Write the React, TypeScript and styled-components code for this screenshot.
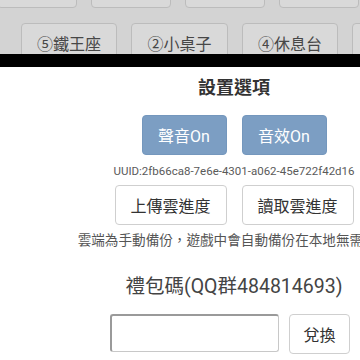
import React from 'react';
import styled, { createGlobalStyle } from 'styled-components';

const GlobalStyle = createGlobalStyle`
  html, body {
    margin: 0;
    padding: 0;
    background: #ffffff;
  }
  body {
    width: 360px;
    height: 360px;
    overflow: hidden;
    font-family: Roboto, "Noto Sans CJK TC", sans-serif;
  }
`;

const Screen = styled.div`
  width: 360px;
  height: 360px;
  overflow: hidden;
  display: flex;
  flex-direction: column;
`;

const Backdrop = styled.div`
  height: 54px;
  flex-shrink: 0;
  background: #d3d3d3;
  overflow: hidden;
`;

const BackdropRows = styled.div`
  margin-top: -28px;
  display: flex;
  flex-direction: column;
  gap: 15px;
`;

const BackdropRow = styled.div<{ $offset: number }>`
  display: flex;
  gap: 14px;
  margin-left: ${p => p.$offset}px;
`;

const MapButton = styled.div<{ $w: number }>`
  flex-shrink: 0;
  width: ${p => p.$w}px;
  height: 36px;
  box-sizing: border-box;
  background: #d9d9d9;
  border: 1px solid #bcbcbc;
  border-radius: 4px;
  display: flex;
  align-items: center;
  justify-content: center;
  padding-top: 4px;
  font-size: 16px;
  color: #474747;
`;

const HeaderBar = styled.div`
  height: 13px;
  flex-shrink: 0;
  background: #000;
`;

const Panel = styled.div`
  width: 468px;
  flex: 1;
  background: #fff;
  display: flex;
  flex-direction: column;
  align-items: center;
  padding-top: 9px;
`;

const Title = styled.div`
  font-size: 18px;
  line-height: 24px;
  font-weight: bold;
  color: #333;
`;

const ButtonRow = styled.div<{ $top: number }>`
  display: flex;
  gap: 15px;
  margin-top: ${p => p.$top}px;
`;

const ToggleButton = styled.button`
  width: 85px;
  height: 40px;
  border: 1px solid #7497bd;
  border-radius: 4px;
  background: #7c9ec3;
  color: #fff;
  font-family: inherit;
  font-size: 16px;
  padding: 0;
`;

const PlainButton = styled.button<{ $w: number }>`
  width: ${p => p.$w}px;
  height: 40px;
  border: 1px solid #cfcfcf;
  border-radius: 4px;
  background: #fff;
  color: #333;
  font-family: inherit;
  font-size: 16px;
  padding: 0;
  white-space: nowrap;
`;

const Uuid = styled.div`
  margin-top: 9px;
  font-size: 11.5px;
  line-height: 14px;
  color: #5a5a5a;
  white-space: nowrap;
`;

const Note = styled.div`
  margin-top: 6px;
  font-size: 13.6px;
  line-height: 18px;
  color: #555;
  white-space: nowrap;
`;

const GiftLabel = styled.div`
  margin-top: 26px;
  font-size: 19.5px;
  line-height: 24px;
  color: #444;
  white-space: nowrap;
`;

const GiftRow = styled.div`
  margin-top: 15px;
  margin-right: 8px;
  display: flex;
  align-items: flex-start;
  gap: 10px;
`;

const CodeInput = styled.input`
  width: 169px;
  height: 38px;
  box-sizing: border-box;
  border: 1px solid #c8c8c8;
  border-top: 2px solid #9a9a9a;
  border-left: 2px solid #9a9a9a;
  border-radius: 3px;
  background: #fff;
  font-size: 16px;
  outline: none;
`;

const topRow = [80, 80, 80, 80];
const bottomRow = ['⑤鐵王座', '②小桌子', '④休息台', ''];
const bottomWidths = [96, 97, 96, 96];

export default function App() {
  return (
    <Screen>
      <GlobalStyle />
      <Backdrop>
        <BackdropRows>
          <BackdropRow $offset={-3}>
            {topRow.map((w, i) => (
              <MapButton key={i} $w={w} />
            ))}
          </BackdropRow>
          <BackdropRow $offset={21}>
            {bottomRow.map((t, i) => (
              <MapButton key={i} $w={bottomWidths[i]}>{t}</MapButton>
            ))}
          </BackdropRow>
        </BackdropRows>
      </Backdrop>
      <HeaderBar />
      <Panel>
        <Title>設置選項</Title>
        <ButtonRow $top={15}>
          <ToggleButton>聲音On</ToggleButton>
          <ToggleButton>音效On</ToggleButton>
        </ButtonRow>
        <Uuid>UUID:2fb66ca8-7e6e-4301-a062-45e722f42d16</Uuid>
        <ButtonRow $top={7}>
          <PlainButton $w={112}>上傳雲進度</PlainButton>
          <PlainButton $w={112}>讀取雲進度</PlainButton>
        </ButtonRow>
        <Note>雲端為手動備份，遊戲中會自動備份在本地無需操作</Note>
        <GiftLabel>禮包碼(QQ群484814693)</GiftLabel>
        <GiftRow>
          <CodeInput />
          <PlainButton $w={61}>兌換</PlainButton>
        </GiftRow>
      </Panel>
    </Screen>
  );
}
